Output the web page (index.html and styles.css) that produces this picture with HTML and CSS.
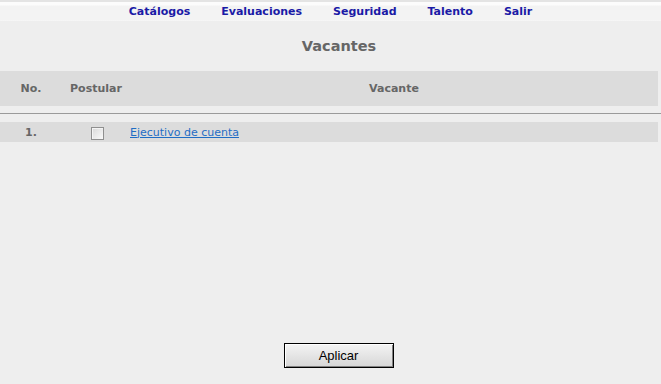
FILE: index.html
```html
<!DOCTYPE html>
<html lang="es">
<head>
<meta charset="UTF-8">
<title>Vacantes</title>
<link rel="stylesheet" href="styles.css">
</head>
<body>
    <div class="menu">
        <a href="#">Catálogos</a>
        <a href="#">Evaluaciones</a>
        <a href="#">Seguridad</a>
        <a href="#">Talento</a>
        <a href="#">Salir</a>
    </div>

    <h2 class="titulo">Vacantes</h2>

    <table class="encabezado">
        <tr><th class="col-no">No.</th><th class="col-post">Postular</th><th class="col-vac">Vacante</th></tr>
    </table>

    <hr class="linea">

    <table class="lista">
        <tr>
            <td class="col-no">1.</td>
            <td class="col-post"><input type="checkbox"></td>
            <td class="col-vac"><a href="#">Ejecutivo de cuenta</a></td>
        </tr>
    </table>

    <div class="acciones">
        <button>Aplicar</button>
    </div>
</body>
</html>
```

FILE: styles.css
```css
body {
    margin: 0;
    height: 384px;
    background-color: #eeeeee;
    font-family: "DejaVu Sans", Verdana, sans-serif;
    font-size: 11px;
    display: flex;
    flex-direction: column;
}
.menu {
    height: 21px;
    display: flex;
    justify-content: center;
    align-items: center;
    gap: 31px;
    box-sizing: border-box;
    border-top: 2px solid #e4e4e4;
    background: linear-gradient(#fcfcfc 0, #fcfcfc 3px, #f3f3f3 4px, #f3f3f3 18px, #f8f8f8 19px);
}
.menu a {
    color: #1a1aa6;
    font-weight: bold;
    text-decoration: none;
}
.titulo {
    margin: 0;
    padding: 17px 0 0 17px;
    height: 33px;
    text-align: center;
    font-size: 14.5px;
    color: #666666;
}
table {
    width: 658px;
    border-collapse: collapse;
}
.encabezado {
    background-color: #dcdcdc;
    height: 35px;
}
.encabezado th {
    color: #666666;
    font-size: 11px;
    padding: 0;
}
.col-no {
    width: 62px;
    text-align: center;
}
.col-post {
    width: 68px;
    text-align: center;
}
.encabezado .col-vac {
    text-align: center;
}
.linea {
    margin: 7px 0 0;
    border: none;
    border-top: 1px solid #9a9a9a;
    width: 661px;
}
.lista {
    margin-top: 8px;
    background-color: #dcdcdc;
    height: 20px;
}
.lista td {
    padding: 0;
}
.lista .col-no {
    color: #666666;
    font-weight: bold;
}
.lista input {
    appearance: none;
    margin: 2px 0 0 3px;
    width: 13px;
    height: 13px;
    vertical-align: middle;
    border: 1px solid #8f8f8f;
    background: linear-gradient(135deg, #d8d8d8, #fafafa);
    box-shadow: inset 1px 1px 0 #f4f4f4;
}
.lista a {
    color: #1f6dc5;
}
.acciones {
    margin-top: auto;
    padding-bottom: 16px;
    text-align: center;
    padding-left: 16px;
}
button {
    width: 110px;
    height: 25px;
    font-family: "Liberation Sans", Arial, sans-serif;
    font-size: 13px;
    color: #000000;
    background: linear-gradient(#f4f4f4, #d6d6d6);
    border: 1px solid #000000;
    box-shadow: inset 1px 1px 0 #ffffff, inset -1px -1px 0 #808080;
    padding: 0;
}
```
